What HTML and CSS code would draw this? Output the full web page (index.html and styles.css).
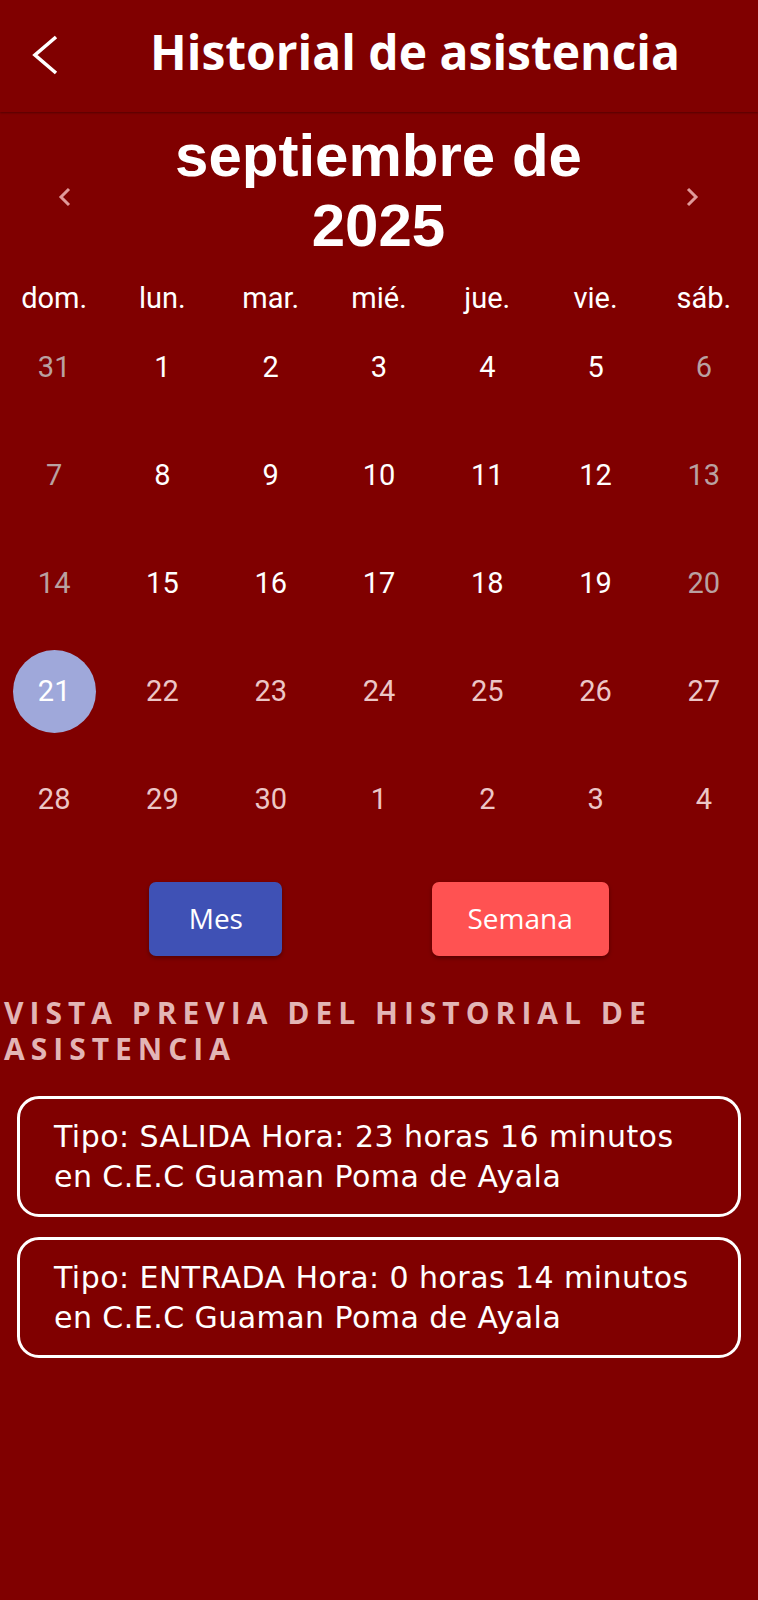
FILE: index.html
```html
<!DOCTYPE html>
<html lang="es">
<head>
<meta charset="utf-8">
<title>Historial de asistencia</title>
<link rel="stylesheet" href="styles.css">
</head>
<body>
<div class="app">
  <header class="appbar">
    <button class="back" aria-label="Atrás">
      <svg width="30" height="44" viewBox="0 0 30 44"><polyline points="26,4 5,22 26,40" fill="none" stroke="#fff" stroke-width="3.6"/></svg>
    </button>
    <h1 class="appbar-title">Historial de asistencia</h1>
  </header>

  <section class="month-nav">
    <button class="chev" aria-label="Mes anterior">
      <svg width="14" height="20" viewBox="0 0 14 20"><polyline points="11,2 3,10 11,18" fill="none" stroke="#e09a9a" stroke-width="3"/></svg>
    </button>
    <h2 class="month-title">septiembre de<br>2025</h2>
    <button class="chev" aria-label="Mes siguiente">
      <svg width="14" height="20" viewBox="0 0 14 20"><polyline points="3,2 11,10 3,18" fill="none" stroke="#e09a9a" stroke-width="3"/></svg>
    </button>
  </section>

  <div class="weekdays">
    <span>dom.</span><span>lun.</span><span>mar.</span><span>mié.</span><span>jue.</span><span>vie.</span><span>sáb.</span>
  </div>

  <div class="days">
    <div class="cell"><span class="num we">31</span></div>
    <div class="cell"><span class="num">1</span></div>
    <div class="cell"><span class="num">2</span></div>
    <div class="cell"><span class="num">3</span></div>
    <div class="cell"><span class="num">4</span></div>
    <div class="cell"><span class="num">5</span></div>
    <div class="cell"><span class="num we">6</span></div>

    <div class="cell"><span class="num we">7</span></div>
    <div class="cell"><span class="num">8</span></div>
    <div class="cell"><span class="num">9</span></div>
    <div class="cell"><span class="num">10</span></div>
    <div class="cell"><span class="num">11</span></div>
    <div class="cell"><span class="num">12</span></div>
    <div class="cell"><span class="num we">13</span></div>

    <div class="cell"><span class="num we">14</span></div>
    <div class="cell"><span class="num">15</span></div>
    <div class="cell"><span class="num">16</span></div>
    <div class="cell"><span class="num">17</span></div>
    <div class="cell"><span class="num">18</span></div>
    <div class="cell"><span class="num">19</span></div>
    <div class="cell"><span class="num we">20</span></div>

    <div class="cell"><span class="num selected">21</span></div>
    <div class="cell"><span class="num dim">22</span></div>
    <div class="cell"><span class="num dim">23</span></div>
    <div class="cell"><span class="num dim">24</span></div>
    <div class="cell"><span class="num dim">25</span></div>
    <div class="cell"><span class="num dim">26</span></div>
    <div class="cell"><span class="num dim">27</span></div>

    <div class="cell"><span class="num dim">28</span></div>
    <div class="cell"><span class="num dim">29</span></div>
    <div class="cell"><span class="num dim">30</span></div>
    <div class="cell"><span class="num dim">1</span></div>
    <div class="cell"><span class="num dim">2</span></div>
    <div class="cell"><span class="num dim">3</span></div>
    <div class="cell"><span class="num dim">4</span></div>
  </div>

  <div class="modes">
    <button class="btn btn-month">Mes</button>
    <button class="btn btn-week">Semana</button>
  </div>

  <h3 class="section-title">VISTA PREVIA DEL HISTORIAL DE ASISTENCIA</h3>

  <ul class="records">
    <li class="record">Tipo: SALIDA Hora: 23 horas 16 minutos<br>en C.E.C Guaman Poma de Ayala</li>
    <li class="record">Tipo: ENTRADA Hora: 0 horas 14 minutos<br>en C.E.C Guaman Poma de Ayala</li>
  </ul>
</div>
</body>
</html>
```

FILE: styles.css
```css
* { box-sizing: border-box; }

html, body {
  margin: 0;
  padding: 0;
  background: #800000;
}

body {
  width: 758px;
  min-height: 1600px;
  color: #fff;
  font-family: Roboto, "Liberation Sans", sans-serif;
}

button {
  font: inherit;
  color: inherit;
  border: 0;
  background: none;
  padding: 0;
  margin: 0;
}

/* App bar */
.appbar {
  height: 112px;
  display: flex;
  align-items: center;
  padding: 0 0 8px 30px;
  background: #800000;
  box-shadow: 0 1px 2px rgba(0, 0, 0, 0.35);
  position: relative;
}

.back {
  width: 30px;
  height: 44px;
  display: flex;
  margin-top: 6px;
}

.appbar-title {
  margin: 0 0 0 90px;
  font-family: "Open Sans", sans-serif;
  font-weight: 700;
  font-size: 48px;
  line-height: 60px;
  color: #fff;
  white-space: nowrap;
}

/* Month navigation */
.month-nav {
  display: flex;
  align-items: center;
  padding: 0 41px 0 40px;
  margin-top: 9px;
  height: 140px;
}

.chev {
  width: 50px;
  height: 40px;
  display: flex;
  align-items: center;
  justify-content: center;
  margin-top: 12px;
}

.month-title {
  flex: 1;
  margin: 0;
  text-align: center;
  font-family: "Liberation Sans", Arial, sans-serif;
  font-weight: 700;
  font-size: 60px;
  line-height: 70px;
  color: #fff;
}

/* Weekdays */
.weekdays {
  display: grid;
  grid-template-columns: repeat(7, 1fr);
  margin-top: 22px;
  height: 30px;
  font-size: 29px;
  line-height: 30px;
  text-align: center;
}

/* Days */
.days {
  display: grid;
  grid-template-columns: repeat(7, 1fr);
  grid-auto-rows: 108px;
}

.cell {
  display: flex;
  align-items: center;
  justify-content: center;
}

.num {
  font-size: 29px;
  color: #fff;
}

.num.we { color: #b9a1a1; }
.num.dim { color: #ecc6c6; }

.num.selected {
  width: 83px;
  height: 83px;
  border-radius: 50%;
  background: #9fa8da;
  display: flex;
  align-items: center;
  justify-content: center;
  color: #fff;
}

/* Mode buttons */
.modes {
  display: flex;
  justify-content: space-evenly;
  margin-top: 29px;
}

.btn {
  height: 74px;
  border-radius: 7px;
  font-family: "Open Sans", sans-serif;
  font-weight: 500;
  font-size: 28px;
  color: #fff;
  padding-bottom: 3px;
  box-shadow: 0 2px 4px rgba(0, 0, 0, 0.35);
}

.btn-month { width: 133px; background: #3f51b5; }
.btn-week { width: 177px; background: #ff5252; }

/* Section title */
.section-title {
  margin: 39px 0 0 4px;
  font-family: "Open Sans", sans-serif;
  font-weight: 700;
  font-size: 30px;
  line-height: 36px;
  letter-spacing: 6px;
  color: #e3b5b5;
}

/* Records */
.records {
  list-style: none;
  margin: 29px 0 0 17px;
  padding: 0;
  width: 724px;
  display: flex;
  flex-direction: column;
  gap: 20px;
}

.record {
  border: 3px solid #fff;
  border-radius: 22px;
  padding: 17.5px 20px 17.5px 34px;
  font-family: "DejaVu Sans", sans-serif;
  font-size: 30px;
  line-height: 40px;
  letter-spacing: 0.45px;
  white-space: nowrap;
  color: #fff;
}
```
